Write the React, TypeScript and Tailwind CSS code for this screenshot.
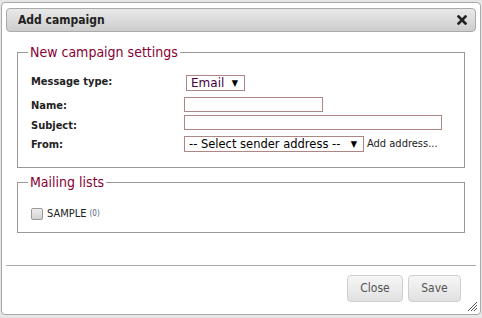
import React from 'react'

const font = { fontFamily: '"DejaVu Sans Condensed", "DejaVu Sans", Verdana, sans-serif' }
const wide = { fontFamily: '"DejaVu Sans", Verdana, sans-serif' }

function Legend({ children }: { children: React.ReactNode }) {
  return (
    <legend className="-ml-[3px] px-[2px] text-[14px] leading-[17px] text-[#880033]">{children}</legend>
  )
}

function FieldLabel({ children }: { children: React.ReactNode }) {
  return <div className="text-[11px] font-bold leading-[13px] text-[#222]">{children}</div>
}

function Caret() {
  return <span className="text-[9px] leading-none text-black">▼</span>
}

export default function App() {
  return (
    <div className="w-[482px] h-[318px] bg-[#e6e6e6] pl-px pr-px pt-[2px] pb-[3px]" style={font}>
      <div className="h-full rounded-[4px] border border-[#a9a9a9] bg-white px-[4px] pt-[5px] flex flex-col relative">
        {/* title bar */}
        <div className="h-[24px] rounded-[4px] border border-[#aaa] bg-gradient-to-b from-[#e9e9e9] to-[#cdcdcd] flex items-center justify-between pl-[11px] pr-[8px]">
          <span className="text-[12px] font-bold text-[#222]">Add campaign</span>
          <svg width="10" height="10" viewBox="0 0 10 10">
            <path d="M1.5 1.5 L8.5 8.5 M8.5 1.5 L1.5 8.5" stroke="#222" strokeWidth="2.6" strokeLinecap="square" />
          </svg>
        </div>

        <div className="px-[11px]">
          <fieldset className="mt-[12px] border border-[#999] px-[13px] pt-[14px] pb-[14px]">
            <Legend>New campaign settings</Legend>
            <div className="grid grid-cols-[153px_1fr] items-start">
              <FieldLabel>Message type:</FieldLabel>
              <div className="ml-[2px] w-[59px] h-[16px] border border-[#b08585] flex items-center justify-between pl-[4px] pr-[6px]">
                <span className="text-[12px] leading-none text-[#4a0040]" style={wide}>Email</span>
                <Caret />
              </div>

              <div className="mt-[8px]"><FieldLabel>Name:</FieldLabel></div>
              <div className="mt-[6px] w-[139px] h-[15px] border border-[#b08585]" />

              <div className="mt-[7px]"><FieldLabel>Subject:</FieldLabel></div>
              <div className="mt-[3px] w-[258px] h-[15px] border border-[#b08585]" />

              <div className="mt-[6px]"><FieldLabel>From:</FieldLabel></div>
              <div className="mt-[4px] flex items-center">
                <div className="w-[180px] h-[16px] border border-[#b08585] flex items-center justify-between pl-[4px] pr-[6px]">
                  <span className="text-[11.5px] leading-none text-black whitespace-nowrap" style={wide}>-- Select sender address --</span>
                  <Caret />
                </div>
                <span className="ml-[3px] text-[11px] text-[#222] whitespace-nowrap">Add address...</span>
              </div>
            </div>
          </fieldset>

          <fieldset className="mt-[6px] border border-[#999] px-[13px] pt-[17px] pb-[12px]">
            <Legend>Mailing lists</Legend>
            <div className="flex items-center">
              <span className="w-[12px] h-[12px] rounded-[2px] border border-[#999] bg-gradient-to-b from-[#eee] to-[#d2d2d2]" />
              <span className="ml-[4px] text-[11px] leading-none text-[#222]">SAMPLE</span>
              <span className="ml-[3px] text-[8px] leading-none text-[#4a5a7a]">(0)</span>
            </div>
          </fieldset>
        </div>

        <div className="mt-[32px] border-t border-[#aaa] flex justify-end gap-[5px] pt-[9px] pr-[15px]">
          <button className="w-[56px] h-[27px] rounded-[4px] border border-[#cfcfcf] bg-gradient-to-b from-[#f6f6f6] to-[#e1e1e1] text-[12px] text-[#555]">Close</button>
          <button className="w-[53px] h-[27px] rounded-[4px] border border-[#cfcfcf] bg-gradient-to-b from-[#f6f6f6] to-[#e1e1e1] text-[12px] text-[#555]">Save</button>
        </div>

        <svg className="absolute right-[2px] bottom-[2px]" width="12" height="12" viewBox="0 0 12 12">
          <path d="M11 2 L2 11 M11 5 L5 11 M11 8 L8 11" stroke="#555" strokeWidth="1" />
        </svg>
      </div>
    </div>
  )
}
